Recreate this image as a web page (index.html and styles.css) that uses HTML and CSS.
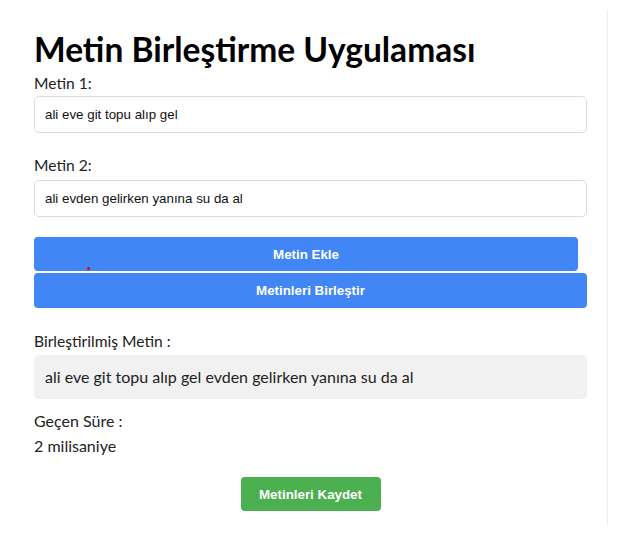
FILE: index.html
```html
<!DOCTYPE html>
<html lang="tr">
<head>
<meta charset="utf-8">
<title>Metin Birleştirme Uygulaması</title>
<link rel="stylesheet" href="styles.css">
</head>
<body>
<div class="app">
  <h1 class="title">Metin Birleştirme Uygulaması</h1>
  <label class="label label-first" for="t1">Metin 1:</label>
  <input class="field" id="t1" type="text" value="ali eve git topu alıp gel">
  <label class="label label-second" for="t2">Metin 2:</label>
  <input class="field" id="t2" type="text" value="ali evden gelirken yanına su da al">
  <button class="btn btn-blue btn-add" type="button">Metin Ekle</button>
  <button class="btn btn-blue btn-merge" type="button">Metinleri Birleştir</button>
  <div class="label label-result">Birleştirilmiş Metin :</div>
  <div class="result">ali eve git topu alıp gel evden gelirken yanına su da al</div>
  <div class="info info-first">Geçen Süre :</div>
  <div class="info">2 milisaniye</div>
  <div class="actions">
    <button class="btn btn-green" type="button">Metinleri Kaydet</button>
  </div>
  <span class="cursor-dot"></span>
</div>
</body>
</html>
```
FILE: styles.css
```css
html, body {
  margin: 0;
  padding: 0;
  background: #ffffff;
}
body {
  font-family: Lato, "Noto Sans", sans-serif;
  color: #222;
}
.app {
  position: relative;
  box-sizing: border-box;
  width: 608px;
  margin-top: 10px;
  min-height: 515px;
  padding: 19px 20px 0 34px;
  border-right: 1px solid #ececec;
  display: flex;
  flex-direction: column;
}
.title {
  margin: 0 0 1px;
  font-size: 33.5px;
  line-height: 40px;
  font-weight: 700;
  color: #000;
}
.label {
  display: block;
  font-size: 15.6px;
  line-height: 20px;
  color: #222;
}
.label-first { margin-top: 3px; margin-bottom: 3px; }
.label-second { margin-top: 22px; margin-bottom: 5px; }
.label-result { margin-top: 23px; margin-bottom: 4px; }
.field {
  box-sizing: border-box;
  width: 553px;
  height: 37px;
  margin: 0;
  padding: 0 10px;
  border: 1px solid #dcdcdc;
  border-radius: 5px;
  font-family: "Liberation Sans", Arial, sans-serif;
  font-size: 13.33px;
  color: #111;
  background: #fff;
}
.btn {
  box-sizing: border-box;
  border: none;
  border-radius: 4px;
  color: #fff;
  font-family: "Liberation Sans", Arial, sans-serif;
  font-weight: 700;
  font-size: 13.33px;
  cursor: pointer;
  padding: 0;
}
.btn-blue { background: #4285f4; }
.btn-add {
  margin-top: 20px;
  width: 544px;
  height: 34px;
}
.btn-merge {
  margin-top: 2px;
  width: 553px;
  height: 35px;
}
.result {
  box-sizing: border-box;
  width: 553px;
  height: 44px;
  padding: 10px 11px;
  background: #f1f1f1;
  border-radius: 5px;
  font-size: 16px;
  line-height: 24px;
  color: #222;
}
.info {
  font-size: 16px;
  line-height: 25px;
  color: #222;
}
.info-first { margin-top: 9px; }
.actions {
  display: flex;
  justify-content: center;
  width: 553px;
  margin-top: 19px;
}
.btn-green {
  background: #4caf50;
  width: 140px;
  height: 34px;
}
.cursor-dot {
  position: absolute;
  left: 87px;
  top: 257px;
  width: 3px;
  height: 3px;
  border-radius: 50%;
  background: #e00000;
}
```
